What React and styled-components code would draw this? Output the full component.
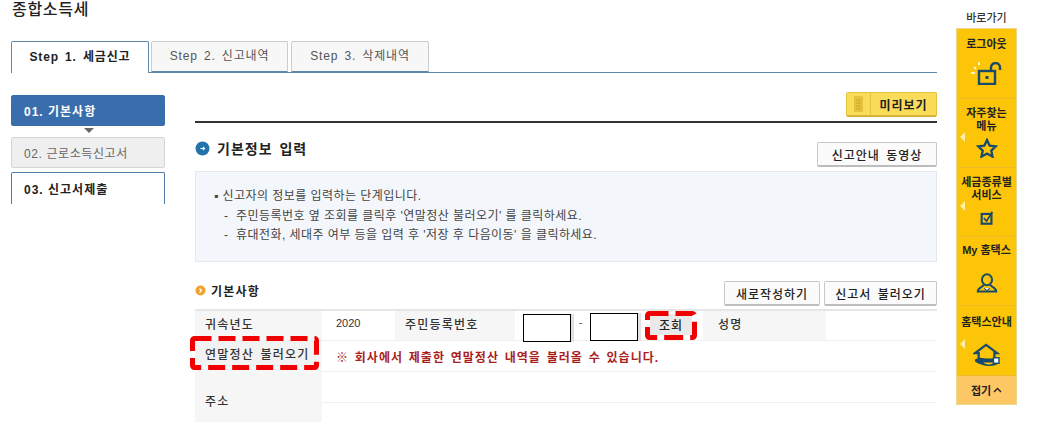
import React from "react";
import styled, { createGlobalStyle } from "styled-components";

const GlobalStyle = createGlobalStyle`
  html, body {
    margin: 0;
    padding: 0;
    background: #fff;
  }
  body {
    font-family: "Liberation Sans", "Noto Sans CJK KR", sans-serif;
    font-size: 12px;
    color: #333;
  }
`;

const Page = styled.div`
  width: 1038px;
  height: 422px;
  overflow: hidden;
  box-sizing: border-box;
  display: grid;
  grid-template-columns: 956px 61px;
  background: #fff;
`;

const Left = styled.div`
  padding: 0 0 0 11px;
  display: flex;
  flex-direction: column;
`;

const Title = styled.h1`
  margin: 0;
  height: 41px;
  padding: 1px 0 0 1px;
  box-sizing: border-box;
  font-size: 16px;
  line-height: 17px;
  font-weight: 500;
  letter-spacing: 0.7px;
  color: #222;
`;

const Tabs = styled.div`
  display: flex;
  width: 926px;
  height: 31px;
  border-bottom: 1px solid #5e87a8;
  box-sizing: content-box;
`;

const Tab = styled.div`
  width: ${(p) => p.$w}px;
  margin-right: ${(p) => p.$gap}px;
  height: ${(p) => (p.$active ? 32 : 31)}px;
  box-sizing: border-box;
  display: flex;
  align-items: center;
  justify-content: center;
  padding-bottom: 4px;
  font-size: 12px;
  font-weight: ${(p) => (p.$active ? 700 : 400)};
  letter-spacing: 0.85px;
  word-spacing: 2px;
  color: ${(p) => (p.$active ? "#222" : "#555")};
  background: ${(p) => (p.$active ? "#fff" : "#f7f7f7")};
  border: 1px solid ${(p) => (p.$active ? "#5e87a8" : "#ccc")};
  border-bottom: ${(p) => (p.$active ? "none" : "1px solid #5e87a8")};
  border-radius: 2px 2px 0 0;
`;

const Body = styled.div`
  display: grid;
  grid-template-columns: 154px 742px;
  column-gap: 30px;
  margin-top: 19px;
`;

const Nav = styled.div`
  display: flex;
  flex-direction: column;
  padding-top: 3px;
`;

const NavItem = styled.div`
  height: ${(p) => (p.$kind === "last" ? 32 : 31)}px;
  box-sizing: border-box;
  padding-left: 12px;
  display: flex;
  align-items: center;
  font-size: 12px;
  letter-spacing: ${(p) => (p.$kind === "todo" ? 0.6 : 1)}px;
  font-weight: ${(p) => (p.$kind === "todo" ? 400 : 700)};
  color: ${(p) => (p.$kind === "on" ? "#fff" : p.$kind === "todo" ? "#666" : "#222")};
  background: ${(p) => (p.$kind === "on" ? "#3a6dac" : p.$kind === "todo" ? "#efefef" : "#fff")};
  border: 1px solid ${(p) => (p.$kind === "on" ? "#3a6dac" : p.$kind === "todo" ? "#d5d5d5" : "#4f7ba6")};
  border-bottom: ${(p) => (p.$kind === "last" ? "none" : undefined)};
  border-radius: 2px 2px ${(p) => (p.$kind === "last" ? "0 0" : "2px 2px")};
  margin-top: ${(p) => (p.$kind === "last" ? 4 : 0)}px;
`;

const NavArrow = styled.div`
  width: 0;
  height: 0;
  margin: 2px 0 4px 73px;
  border-left: 5px solid transparent;
  border-right: 5px solid transparent;
  border-top: 5px solid #666;
`;

const Main = styled.div`
  display: flex;
  flex-direction: column;
`;

const PreviewRow = styled.div`
  display: flex;
  justify-content: flex-end;
`;

const PreviewButton = styled.div`
  width: 91px;
  height: 25px;
  box-sizing: border-box;
  display: flex;
  background: #f9dc58;
  border: 1px solid #e6c33f;
  border-bottom: 2px solid #d8b436;
  border-radius: 2px;
  font-size: 12px;
  font-weight: 700;
  color: #222;
  letter-spacing: 1px;
`;

const PreviewIcon = styled.span`
  width: 23px;
  display: flex;
  align-items: center;
  justify-content: center;
  border-right: 1px solid #e6c33f;
`;

const PreviewLabel = styled.span`
  flex: 1;
  display: flex;
  align-items: center;
  justify-content: center;
`;

const Rule = styled.div`
  height: 2px;
  background: #333;
  margin-top: 4px;
`;

const HeadRow = styled.div`
  display: flex;
  align-items: flex-start;
  justify-content: space-between;
  margin-top: 19px;
`;

const HeadTitle = styled.h2`
  margin: -2px 0 0;
  display: flex;
  align-items: center;
  gap: 7px;
  height: 16px;
  font-size: 14px;
  font-weight: 700;
  letter-spacing: 1px;
  word-spacing: 2px;
  color: #222;
`;

const Button = styled.div`
  height: 25px;
  width: ${(p) => p.$w}px;
  box-sizing: border-box;
  display: flex;
  align-items: center;
  justify-content: center;
  background: #fbfbfb;
  border: 1px solid #c8c8c8;
  border-bottom: 2px solid #bdbdbd;
  border-radius: 2px;
  font-size: 12px;
  font-weight: 500;
  letter-spacing: 1px;
  word-spacing: 2px;
  color: #222;
`;

const InfoBox = styled.div`
  margin-top: 4px;
  height: 91px;
  box-sizing: border-box;
  padding: 15px 0 0 18px;
  background: #f3f6fa;
  border: 1px solid #e4e8ec;
  font-size: 12px;
  line-height: 19.5px;
  color: #444;
`;

const InfoLine = styled.div`
  padding-left: ${(p) => (p.$sub ? 10 : 0)}px;
  letter-spacing: 0.45px;
`;

const SectionRow = styled.div`
  display: flex;
  align-items: center;
  justify-content: space-between;
  margin-top: 19px;
`;

const SectionTitle = styled.h3`
  margin: 0;
  display: flex;
  align-items: center;
  gap: 5px;
  font-size: 12px;
  font-weight: 700;
  letter-spacing: 1.2px;
  color: #222;
  padding-bottom: 6px;
`;

const ButtonGroup = styled.div`
  display: flex;
  gap: 4px;
`;

const Table = styled.div`
  margin-top: 3px;
  display: grid;
  grid-template-columns: 127px 73px 120px 130px 58px 123px 111px;
  grid-template-rows: 30px 31px 31px 20px;
  border-top: 2px solid #e6e6e6;
`;

const Th = styled.div`
  background: #f6f6f6;
  display: flex;
  align-items: center;
  padding-left: ${(p) => p.$pad ?? 10}px;
  padding-top: ${(p) => p.$pt ?? 0}px;
  padding-bottom: ${(p) => p.$pb ?? 5}px;
  box-sizing: border-box;
  font-size: 12px;
  font-weight: 500;
  letter-spacing: 1.2px;
  color: #333;
  border-bottom: ${(p) => (p.$flat ? "none" : "1px solid #efefef")};
  grid-row: ${(p) => p.$row || "auto"};
`;

const Td = styled.div`
  display: flex;
  align-items: center;
  box-sizing: border-box;
  padding-left: ${(p) => p.$pad ?? 0}px;
  padding-bottom: ${(p) => p.$pb ?? 5}px;
  border-bottom: 1px solid #efefef;
  grid-column: ${(p) => p.$span || "auto"};
  font-size: 11px;
  color: #333;
`;

const SsnCell = styled(Td)`
  padding: 0 0 0 8px;
  align-items: flex-start;
`;

const SsnBox = styled.div`
  width: 48px;
  height: 28px;
  margin-top: ${(p) => p.$t}px;
  box-sizing: border-box;
  background: #fff;
  border: 1px solid #000;
  box-shadow: 3px 0 0 #e2e2e2;
`;

const Dash = styled.span`
  width: 19px;
  text-align: center;
  padding-top: 5px;
  color: #555;
`;

const LookupCell = styled(Td)`
  position: relative;
  padding: 0;
  align-items: flex-start;
`;

const LookupButton = styled.div`
  width: 42px;
  height: 21px;
  margin: 3px 0 0 5px;
  display: flex;
  align-items: center;
  justify-content: center;
  background: #e9e9e9;
  font-size: 12px;
  font-weight: 500;
  letter-spacing: 1px;
  color: #222;
`;

const LoadCell = styled.div`
  position: relative;
  background: #f6f6f6;
  display: flex;
  align-items: flex-start;
  box-sizing: border-box;
  font-size: 12px;
  font-weight: 500;
  letter-spacing: 1.2px;
  word-spacing: 2px;
  color: #333;
`;

const LoadButton = styled.div`
  width: 122px;
  height: 25px;
  display: flex;
  align-items: center;
  padding-left: 10px;
  box-sizing: border-box;
  background: #f2f2f2;
  white-space: nowrap;
`;

const RedlineSvg = styled.svg`
  position: absolute;
  top: ${(p) => p.$t}px;
  left: ${(p) => p.$l}px;
  overflow: visible;
`;

const Notice = styled.div`
  font-size: 12px;
  font-weight: 700;
  letter-spacing: 1px;
  word-spacing: 1.5px;
  color: #a81e1e;
`;

const Side = styled.div`
  display: flex;
  flex-direction: column;
  align-items: stretch;
`;

const SideTitle = styled.div`
  height: 28px;
  box-sizing: border-box;
  padding-top: 11px;
  text-align: center;
  font-size: 11px;
  line-height: 14px;
  font-weight: 500;
  color: #333;
`;

const SideBox = styled.div`
  border: 1px solid #e8d98f;
  background: #fdc507;
  height: 377px;
  box-sizing: border-box;
  display: flex;
  flex-direction: column;
`;

const SideItem = styled.div`
  position: relative;
  height: ${(p) => p.$h}px;
  box-sizing: border-box;
  border-bottom: 1px solid #f0bb2a;
  display: flex;
  flex-direction: column;
  align-items: center;
  justify-content: space-between;
  padding: ${(p) => p.$top}px 0 ${(p) => p.$bottom}px;
  font-size: 11px;
  line-height: 13px;
  font-weight: 700;
  text-align: center;
  color: #222;
  white-space: pre-line;
`;

const SideMark = styled.span`
  position: absolute;
  left: 3px;
  top: 33px;
  width: 0;
  height: 0;
  border-top: 5px solid transparent;
  border-bottom: 5px solid transparent;
  border-right: 5px solid #ffeeaa;
`;

const SideFold = styled.div`
  flex: 1;
  background: #fec765;
  display: flex;
  align-items: center;
  justify-content: center;
  gap: 2px;
  font-size: 11px;
  font-weight: 700;
  color: #222;
`;

const Bullet = ({ color }) => (
  <svg width="15" height="15" viewBox="0 0 14 14">
    <circle cx="7" cy="7" r="6.5" fill={color} />
    <path d="M5 7h4M7.400 5.400 9 7 7.400 8.600" fill="none" stroke="#fff" strokeWidth="1" />
  </svg>
);

const SmallBullet = () => (
  <svg width="11" height="11" viewBox="0 0 11 11">
    <circle cx="5.500" cy="5.500" r="5" fill="#eda32c" />
    <path d="M4.500 3.500 6.500 5.500 4.500 7.500" fill="none" stroke="#fff" strokeWidth="1.200" />
  </svg>
);

// 빨간 점선 표시 (캡처에 손으로 그린 박스)
const Redline = ({ t, l, w, h, dash }) => (
  <RedlineSvg $t={t} $l={l} width={w} height={h}>
    <rect
      x="2.500"
      y="2.500"
      width={w - 5}
      height={h - 5}
      rx="2"
      fill="none"
      stroke="#f00000"
      strokeWidth="5"
      strokeDasharray={dash}
    />
  </RedlineSvg>
);

const ICON = { fill: "none", stroke: "#174a6b", strokeWidth: 2.4 };

const LockIcon = () => (
  <svg width="32" height="23" viewBox="0 0 32 23">
    <rect x="8" y="9" width="16" height="13" fill="#fff" {...ICON} />
    <rect x="14.500" y="14" width="3" height="3" fill="#174a6b" />
    <path d="M20 9V5.500a4.500 4.500 0 0 1 9 0V8" {...ICON} />
    <path d="M0 11h4M3 5l2 2M8 0v3" fill="none" stroke="#fff" strokeWidth="1.600" />
  </svg>
);

const StarIcon = () => (
  <svg width="22" height="20" viewBox="0 0 22 21">
    <path d="M11 2l2.800 6 6.400.8-4.700 4.400 1.300 6.400L11 16.400l-5.800 3.200 1.300-6.400L1.800 8.800 8.200 8z" fill="#fff" {...ICON} />
  </svg>
);

const CheckIcon = () => (
  <svg width="16" height="17" viewBox="0 0 18 18">
    <rect x="3" y="5" width="11" height="11" fill="#fff" {...ICON} />
    <path d="M5.500 9.500 8.500 13 15 2.500" fill="none" stroke="#174a6b" strokeWidth="1.800" />
  </svg>
);

const PersonIcon = () => (
  <svg width="22" height="21" viewBox="0 0 26 25">
    <ellipse cx="13" cy="8" rx="6" ry="6.500" fill="#fec735" {...ICON} />
    <path d="M9 14c-1 3-7 3-7 8h22c0-5-6-5-7-8" fill="#fec735" {...ICON} />
    <path d="M9.500 18l3.500 3 3.500-3" fill="#fff" stroke="#174a6b" strokeWidth="1.200" />
  </svg>
);

const HomeIcon = () => (
  <svg width="28" height="24" viewBox="0 0 30 26">
    <path d="M2 11 14 2l12 9h-3v7H6v-7z" fill="#fff" {...ICON} />
    <path d="M2 18c5-3 9-2 12 0h8v3H11c4 3 8 3 12 0h5v1c-5 4-18 4-26-2z" fill="#174a6b" />
    <rect x="22" y="16" width="6" height="6" fill="#fff" stroke="#174a6b" strokeWidth="1.500" />
  </svg>
);

const BookIcon = () => (
  <svg width="9" height="16" viewBox="0 0 9 16">
    <rect width="9" height="16" fill="#e5c23c" />
    <path d="M2 4h5M2 7h5M2 10h5M2 13h5" stroke="#c9a626" strokeWidth="1" />
  </svg>
);

const Chevron = () => (
  <svg width="9" height="6" viewBox="0 0 9 6">
    <path d="M1 5l3.500-3.500L8 5" fill="none" stroke="#222" strokeWidth="1.400" />
  </svg>
);

const sideMenu = [
  { label: "로그아웃", h: 70, top: 9, bottom: 13, icon: <LockIcon /> },
  { label: "자주찾는\n메뉴", h: 69, top: 8, bottom: 9, mark: true, icon: <StarIcon /> },
  { label: "세금종류별\n서비스", h: 69, top: 8, bottom: 10, mark: true, icon: <CheckIcon /> },
  { label: "My 홈택스", h: 69, top: 7, bottom: 11, icon: <PersonIcon /> },
  { label: "홈택스안내", h: 70, top: 10, bottom: 8, mark: true, icon: <HomeIcon /> },
];

export default function App() {
  return (
    <>
      <GlobalStyle />
      <Page>
        <Left>
          <Title>종합소득세</Title>
          <Tabs>
            <Tab $active $w={138} $gap={2}>Step 1. 세금신고</Tab>
            <Tab $w={137} $gap={3}>Step 2. 신고내역</Tab>
            <Tab $w={138} $gap={0}>Step 3. 삭제내역</Tab>
          </Tabs>
          <Body>
            <Nav>
              <NavItem $kind="on">01. 기본사항</NavItem>
              <NavArrow />
              <NavItem $kind="todo">02. 근로소득신고서</NavItem>
              <NavItem $kind="last">03. 신고서제출</NavItem>
            </Nav>
            <Main>
              <PreviewRow>
                <PreviewButton>
                  <PreviewIcon><BookIcon /></PreviewIcon>
                  <PreviewLabel>미리보기</PreviewLabel>
                </PreviewButton>
              </PreviewRow>
              <Rule />
              <HeadRow>
                <HeadTitle><Bullet color="#2272ab" />기본정보 입력</HeadTitle>
                <Button $w={120}>신고안내 동영상</Button>
              </HeadRow>
              <InfoBox>
                <InfoLine>▪ 신고자의 정보를 입력하는 단계입니다.</InfoLine>
                <InfoLine $sub>-&nbsp; 주민등록번호 옆 조회를 클릭후 '연말정산 불러오기' 를 클릭하세요.</InfoLine>
                <InfoLine $sub>-&nbsp; 휴대전화, 세대주 여부 등을 입력 후 '저장 후 다음이동' 을 클릭하세요.</InfoLine>
              </InfoBox>
              <SectionRow>
                <SectionTitle><SmallBullet />기본사항</SectionTitle>
                <ButtonGroup>
                  <Button $w={96}>새로작성하기</Button>
                  <Button $w={113}>신고서 불러오기</Button>
                </ButtonGroup>
              </SectionRow>
              <Table>
                <Th>귀속년도</Th>
                <Td $pad={14}>2020</Td>
                <Th>주민등록번호</Th>
                <SsnCell>
                  <SsnBox $t={3} />
                  <Dash>-</Dash>
                  <SsnBox $t={2} />
                </SsnCell>
                <LookupCell>
                  <LookupButton>조회</LookupButton>
                  <Redline t={0} l={0} w={52} h={29} dash="19 7" />
                </LookupCell>
                <Th $pad={15}>성명</Th>
                <Td />

                <LoadCell>
                  <LoadButton>연말정산 불러오기</LoadButton>
                  <Redline t={-5} l={-5} w={129} h={34} dash="17 7" />
                </LoadCell>
                <Td $span="2 / -1" $pad={14} $pb={0}>
                  <Notice>※ 회사에서 제출한 연말정산 내역을 불러올 수 있습니다.</Notice>
                </Td>

                <Th $flat $row="3 / 5" $pt={6} $pb={0}>주소</Th>
                <Td $span="2 / -1" />
                <Td $span="2 / -1" />
              </Table>
            </Main>
          </Body>
        </Left>
        <Side>
          <SideTitle>바로가기</SideTitle>
          <SideBox>
            {sideMenu.map((item) => (
              <SideItem key={item.label} $h={item.h} $top={item.top} $bottom={item.bottom}>
                {item.mark && <SideMark />}
                <span>{item.label}</span>
                {item.icon}
              </SideItem>
            ))}
            <SideFold>접기 <Chevron /></SideFold>
          </SideBox>
        </Side>
      </Page>
    </>
  );
}
